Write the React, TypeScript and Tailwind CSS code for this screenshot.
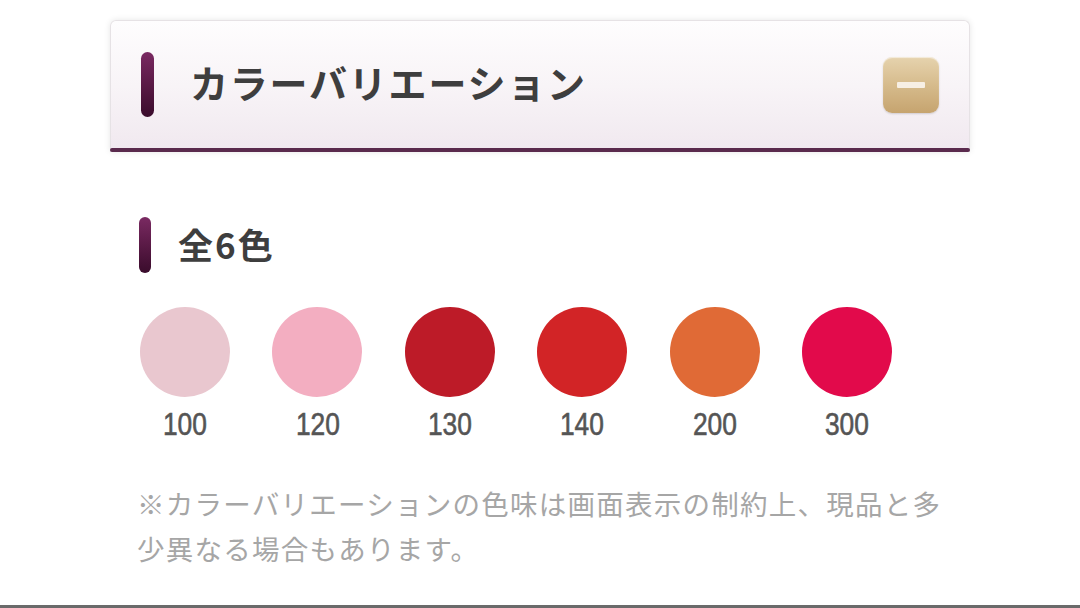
import React from "react";

const swatches = [
  { label: "100", color: "#e9c7cf" },
  { label: "120", color: "#f3aec1" },
  { label: "130", color: "#bd1b28" },
  { label: "140", color: "#d22426" },
  { label: "200", color: "#e06a36" },
  { label: "300", color: "#e20a4b" },
];

export default function App() {
  return (
    <div
      className="relative w-[1080px] h-[608px] bg-white overflow-hidden flex flex-col"
      style={{ fontFamily: '"Noto Sans CJK JP", "Noto Sans", sans-serif' }}
    >
      {/* Header card */}
      <div className="ml-[110px] mt-[20px] w-[860px] h-[132px] rounded-t-[6px] border border-[#e6e2e5] border-b-0 shadow-[0_0_6px_rgba(0,0,0,0.10)] bg-gradient-to-b from-[#fefdfe] via-[#f8f4f7] to-[#f0e8ef] flex flex-col">
        <div className="flex-1 flex items-center pl-[30px] pr-[30px]">
          <div className="w-[13px] h-[65px] rounded-full bg-gradient-to-b from-[#7a2a62] via-[#5a1a46] to-[#3a0c2c]" />
          <div className="ml-[36px] -mt-[6px] text-[38px] font-bold text-[#3e3e3e] tracking-[1.8px] leading-none">
            カラーバリエーション
          </div>
          <div className="ml-auto w-[56px] h-[56px] rounded-[9px] bg-gradient-to-b from-[#e6d3ae] via-[#d6bb8c] to-[#c6a46f] shadow-[inset_0_1px_1px_rgba(255,255,255,0.6),0_1px_2px_rgba(0,0,0,0.15)] flex items-center justify-center">
            <div className="w-[28px] h-[6px] bg-[#f7efe4] rounded-[1px]" />
          </div>
        </div>
        <div className="h-[4px] -mx-[1px] rounded-full bg-[#5a2a4d]" />
      </div>

      {/* Section heading */}
      <div className="ml-[139px] mt-[65px] flex items-center">
        <div className="w-[12px] h-[56px] rounded-full bg-gradient-to-b from-[#7a2a62] via-[#5a1a46] to-[#3a0c2c]" />
        <div className="ml-[27px] -mt-[4px] text-[35px] font-bold text-[#3e3e3e] tracking-[2px] leading-none">
          全6色
        </div>
      </div>

      {/* Swatches */}
      <div className="ml-[140px] mt-[34px] flex gap-[42.4px]">
        {swatches.map((s) => (
          <div key={s.label} className="w-[90px] flex flex-col items-center">
            <div
              className="w-[90px] h-[90px] rounded-full"
              style={{ backgroundColor: s.color }}
            />
            <div
              className="mt-[10px] text-[31px] leading-[36px] text-[#555555] scale-x-85 [-webkit-text-stroke:0.6px_#555555]"
              style={{ fontFamily: '"Liberation Sans", Arial, sans-serif' }}
            >
              {s.label}
            </div>
          </div>
        ))}
      </div>

      {/* Note */}
      <div className="ml-[137px] mt-[38px] w-[830px] text-[27.5px] leading-[45px] tracking-[1.25px] text-[#a6a6a6]">
        ※カラーバリエーションの色味は画面表示の制約上、現品と多
        <br />
        少異なる場合もあります。
      </div>

      <div className="mt-auto h-[3px] bg-[#6a6a6a]" />
    </div>
  );
}
